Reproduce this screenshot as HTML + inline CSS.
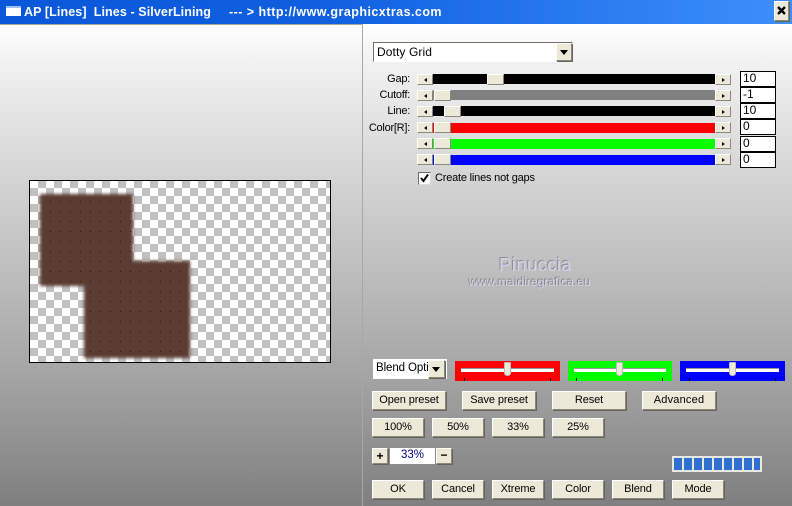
<!DOCTYPE html>
<html><head><meta charset="utf-8"><style>
html,body{margin:0;padding:0}
#r{position:relative;width:792px;height:506px;overflow:hidden;background:linear-gradient(#fff 25px,#f2f2f2 60px,#d6d6d6 170px,#a6a6a6 370px,#7f7f7f 506px);font-family:"Liberation Sans",sans-serif;font-size:12px;color:#000}
#r div{position:absolute;box-sizing:border-box;white-space:pre}
.b{background:#ece9d8;border:1px solid;border-color:#fff #8a887c #8a887c #fff;box-shadow:1px 1px 0 #66655c;text-align:center;font-size:11px;letter-spacing:-.1px}
.a{background:#ece9d8;border:1px solid;border-color:#fff #8a887c #8a887c #fff;width:16px;height:11px}
.a:after{content:"";position:absolute;left:6px;top:3px;border:2px solid transparent}
.l:after{border-right:3px solid #000;border-left:0}
.n:after{border-left:3px solid #000;border-right:0}
.t{height:10px;left:433px;width:282px}
.h{background:#ece9d8;border:1px solid;border-color:#fff #8a887c #8a887c #fff;width:17px;height:11px}
.s{left:740px;width:36px;height:16px;background:#fff;border:1px solid #000;padding-left:2px;line-height:13px;font-size:12px}
.lb{left:350px;width:60px;text-align:right;font-size:11px;letter-spacing:-.25px;line-height:14px}
.c{height:20px;top:361px}
.tr{height:4px;top:368px;background:#fff;border-top:1px solid #999}
.th{width:7px;height:14px;top:362px;background:#ece9d8;border:1px solid #bbb;border-radius:1px 1px 3px 3px}
.k{width:1px;height:3px;background:#000;top:378px}
.p{background:#2f6fd0;width:8px;height:12px;top:458px}
</style></head><body><div id="r">

<div style="left:0;top:0;width:792px;height:24px;background:linear-gradient(90deg,#0a58d9,#0f5fe0 40%,#3d90fb)"></div>
<div style="left:0;top:24px;width:363px;height:1px;background:#aca899"></div>
<div style="left:362px;top:24px;width:1px;height:482px;background:#aca899"></div>
<div style="left:364px;top:24px;width:428px;height:1px;background:#fff"></div>
<div style="left:6px;top:6px;width:15px;height:10px;background:#fff;border-top:2px solid #9cc0f0"></div>
<div style="left:24px;top:4px;height:16px;line-height:16px;color:#fff;font-weight:bold;font-size:12.5px;letter-spacing:.1px">AP [Lines]  Lines - SilverLining</div>
<div style="left:229px;top:4px;height:16px;line-height:16px;color:#fff;font-weight:bold;font-size:12.5px;letter-spacing:.46px">--- &gt; http://www.graphicxtras.com</div>
<div class="b" style="left:774px;top:1px;width:15px;height:20px;padding:0"><svg width="13" height="18" style="display:block"><path d="M3 5 L10 12 M10 5 L3 12" stroke="#000" stroke-width="2.4"/></svg></div>

<!-- preview -->
<div style="left:29px;top:180px;width:302px;height:183px;border:1px solid #000;background-color:#fff;background-image:conic-gradient(#c0c0c0 25%,#fff 0 50%,#c0c0c0 0 75%,#fff 0);background-size:16px 16px;background-position:0 -1px;overflow:hidden"><svg width="300" height="181" style="display:block"><defs><filter id="bl" x="-10%" y="-10%" width="120%" height="120%" color-interpolation-filters="sRGB"><feGaussianBlur stdDeviation="1.6"/></filter><pattern id="dots" x="0" y="0" width="10" height="10" patternUnits="userSpaceOnUse"><rect x="0" y="0" width="1" height="1" fill="#2a1610"/></pattern></defs><path d="M10 13H103V80H160V177H54V105H10Z" fill="#5b3c32" filter="url(#bl)"/><path d="M14 16H103V83H157V174H57V102H14Z" fill="url(#dots)"/></svg></div>

<!-- dropdown -->
<div style="left:373px;top:42px;width:200px;height:20px;background:#fff;border:1px solid;border-color:#716f64 #fff #fff #716f64;padding-left:3px;line-height:18px;font-size:12px;letter-spacing:.1px">Dotty Grid</div>
<div class="b" style="left:556px;top:43px;width:16px;height:18px"></div>
<div style="left:560px;top:50px;width:0;height:0;border:4px solid transparent;border-top:5px solid #000;border-bottom:0"></div>

<!-- labels -->
<div class="lb" style="top:72px">Gap:</div>
<div class="lb" style="top:88px">Cutoff:</div>
<div class="lb" style="top:104px">Line:</div>
<div class="lb" style="top:121px">Color[R]:</div>

<!-- sliders -->
<div class="t" style="top:74px;background:#000"></div>
<div class="t" style="top:90px;background:#808080"></div>
<div class="t" style="top:106px;background:#000"></div>
<div class="t" style="top:123px;background:#f00"></div>
<div class="t" style="top:139px;background:#0f0"></div>
<div class="t" style="top:155px;background:#00f"></div>
<div class="a l" style="left:417px;top:74px"></div><div class="a n" style="left:715px;top:74px"></div>
<div class="a l" style="left:417px;top:90px"></div><div class="a n" style="left:715px;top:90px"></div>
<div class="a l" style="left:417px;top:106px"></div><div class="a n" style="left:715px;top:106px"></div>
<div class="a l" style="left:417px;top:122px"></div><div class="a n" style="left:715px;top:122px"></div>
<div class="a l" style="left:417px;top:138px"></div><div class="a n" style="left:715px;top:138px"></div>
<div class="a l" style="left:417px;top:154px"></div><div class="a n" style="left:715px;top:154px"></div>
<div class="h" style="left:487px;top:74px"></div>
<div class="h" style="left:434px;top:90px"></div>
<div class="h" style="left:444px;top:106px"></div>
<div class="h" style="left:434px;top:122px"></div>
<div class="h" style="left:434px;top:138px"></div>
<div class="h" style="left:434px;top:154px"></div>

<div class="s" style="top:71px">10</div>
<div class="s" style="top:87px">-1</div>
<div class="s" style="top:103px">10</div>
<div class="s" style="top:119px">0</div>
<div class="s" style="top:136px">0</div>
<div class="s" style="top:152px">0</div>

<!-- checkbox -->
<div style="left:418px;top:172px;width:13px;height:13px;background:#fff;border:1px solid;border-color:#716f64 #ddd #ddd #716f64"><svg width="11" height="11" style="display:block"><path d="M2 5 L4.5 8 L9 1.5" fill="none" stroke="#000" stroke-width="2"/></svg></div>
<div style="left:435px;top:171px;line-height:14px;font-size:11px;letter-spacing:-.2px">Create lines not gaps</div>

<!-- watermark -->
<div style="left:499px;top:255px;font-size:18.5px;line-height:20px;color:#d4d4e8;text-shadow:-1px -1px 0 #8c8c98;letter-spacing:.4px">Pinuccia</div>
<div style="left:469px;top:275px;font-size:12px;line-height:14px;color:#d4d4e4;text-shadow:-1px -1px 0 #80808c;letter-spacing:.05px">www.maidiregrafica.eu</div>

<!-- blend -->
<div style="left:373px;top:359px;width:74px;height:20px;background:#fff;overflow:hidden;padding-left:3px;line-height:19px;font-size:11.5px;letter-spacing:-.1px">Blend Opti</div>
<div class="b" style="left:428px;top:360px;width:17px;height:18px"></div>
<div style="left:432px;top:367px;width:0;height:0;border:4px solid transparent;border-top:5px solid #000;border-bottom:0"></div>

<div class="c" style="left:455px;width:105px;background:#f00"></div>
<div class="c" style="left:568px;width:104px;background:#0f0"></div>
<div class="c" style="left:680px;width:105px;background:#00f"></div>
<div class="tr" style="left:461px;width:93px"></div>
<div class="tr" style="left:574px;width:92px"></div>
<div class="tr" style="left:686px;width:93px"></div>
<div class="th" style="left:504px"></div>
<div class="th" style="left:616px"></div>
<div class="th" style="left:729px"></div>
<div class="k" style="left:464px"></div><div class="k" style="left:550px"></div>
<div class="k" style="left:576px"></div><div class="k" style="left:662px"></div>
<div class="k" style="left:689px"></div><div class="k" style="left:775px"></div>

<!-- buttons -->
<div class="b" style="left:372px;top:391px;width:74px;height:19px;line-height:17px">Open preset</div>
<div class="b" style="left:462px;top:391px;width:74px;height:19px;line-height:17px">Save preset</div>
<div class="b" style="left:552px;top:391px;width:74px;height:19px;line-height:17px">Reset</div>
<div class="b" style="left:642px;top:391px;width:74px;height:19px;line-height:17px;letter-spacing:.2px">Advanced</div>
<div class="b" style="left:372px;top:418px;width:52px;height:19px;line-height:17px">100%</div>
<div class="b" style="left:432px;top:418px;width:52px;height:19px;line-height:17px">50%</div>
<div class="b" style="left:492px;top:418px;width:52px;height:19px;line-height:17px">33%</div>
<div class="b" style="left:552px;top:418px;width:52px;height:19px;line-height:17px">25%</div>
<div class="b" style="left:372px;top:448px;width:16px;height:16px;line-height:14px;font-weight:bold;font-size:12px">+</div>
<div style="left:390px;top:448px;width:45px;height:16px;background:#fff;color:#000080;text-align:center;line-height:14px;font-size:11.5px">33%</div>
<div class="b" style="left:436px;top:448px;width:16px;height:16px;line-height:13px;font-weight:bold;font-size:12px">−</div>

<div style="left:672px;top:456px;width:90px;height:16px;background:#e8e8e0"></div>
<div class="p" style="left:674px"></div><div class="p" style="left:684px"></div><div class="p" style="left:694px"></div>
<div class="p" style="left:704px"></div><div class="p" style="left:714px"></div><div class="p" style="left:724px"></div>
<div class="p" style="left:734px"></div><div class="p" style="left:744px"></div><div class="p" style="left:754px;width:6px"></div>

<div class="b" style="left:372px;top:480px;width:52px;height:19px;line-height:17px">OK</div>
<div class="b" style="left:432px;top:480px;width:52px;height:19px;line-height:17px">Cancel</div>
<div class="b" style="left:492px;top:480px;width:52px;height:19px;line-height:17px">Xtreme</div>
<div class="b" style="left:552px;top:480px;width:52px;height:19px;line-height:17px">Color</div>
<div class="b" style="left:612px;top:480px;width:52px;height:19px;line-height:17px">Blend</div>
<div class="b" style="left:672px;top:480px;width:52px;height:19px;line-height:17px">Mode</div>
</div></body></html>
